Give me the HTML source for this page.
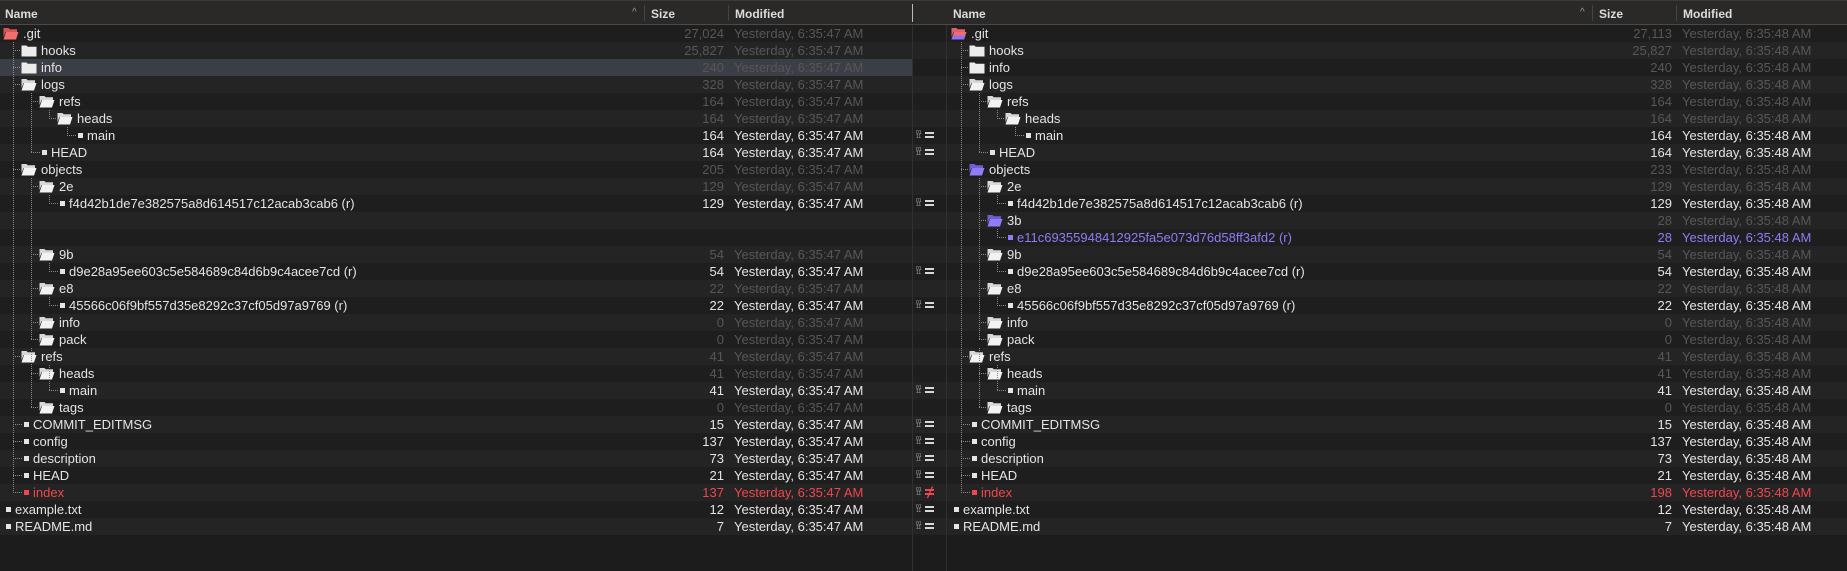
<!DOCTYPE html>
<html><head><meta charset="utf-8">
<style>
*{margin:0;padding:0;box-sizing:border-box}
body{width:1847px;height:546px;background:#1c1c1c;overflow:hidden;font-family:"Liberation Sans",Arial,sans-serif;font-size:13px;color:#e4e4e4;position:relative}
.hdr{position:absolute;left:0;top:0;width:1847px;height:25px;background:#2a2928;border-top:1px solid #3a3a3a;border-bottom:1px solid #4a4a4a}
.hdr .p{height:24px}
.hdr b{position:absolute;top:5px;font-size:12px;color:#dcdcdc}
.hdr .sep{position:absolute;top:4px;width:1px;height:16px;background:#444}
.hdr .car{position:absolute;top:3px;font-size:10px;color:#999}
.rows{position:absolute;left:0;top:25px;width:1847px}
.r{height:17px;position:relative;background:#1e1e1e}
.r:nth-child(even){background:#242424}
.p{position:absolute;top:0;height:17px;overflow:hidden}
.L{left:0;width:912px}
.R{left:948px;width:899px}
.p>*{position:absolute;top:0;line-height:17px;white-space:nowrap}
.s{left:624px;width:100px;text-align:right}
.m{left:734px}
.d{color:#575757}
.w{color:#e4e4e4}
.red{color:#f0474f}
.pur{color:#8f7cf7}
.sel{background:#3b3e45}
.sq{width:5px;height:5px;top:6px;background:#e4e4e4}
.sq.red{background:#f0474f}
.sq.pur{background:#8f7cf7}
svg.f{width:16px;height:13px;top:2px}
.g{position:absolute;left:916px;top:4px;width:20px;height:10px}
.g i{position:absolute;font-style:normal;font-size:5px;line-height:4px;color:#aaa;left:0;top:0;letter-spacing:0}
.g u{position:absolute;left:9px;width:9px;height:2px;background:#d8d8d8;text-decoration:none}
.vl{position:absolute;top:0;width:1px;height:546px;background:#303030}
.tree{position:absolute;top:0;pointer-events:none}
</style></head><body>
<svg width="0" height="0" style="position:absolute">
<defs>
<symbol id="fc" viewBox="0 0 16 13"><path d="M0.5 1.5h5l1.2 1.3h8.8v9.7h-15z" fill="#ececec"/></symbol>
<symbol id="fo" viewBox="0 0 16 13"><path d="M0.5 1h5l1.2 1.3h7.3v2.7h-11.5l-2 5z" fill="#d8d8d8"/><path d="M3 5h12.5l-2.5 7.5h-12.5z" fill="#f2f2f2"/></symbol>
<symbol id="fr" viewBox="0 0 16 13"><path d="M0.5 1h5l1.2 1.3h7.3v2.7h-11.5l-2 5z" fill="#d9534f"/><path d="M3 5h12.5l-2.5 7.5h-12.5z" fill="#f26d6d"/></symbol>
<symbol id="frp" viewBox="0 0 16 13"><path d="M0.5 1h5l1.2 1.3h7.3v2.7h-11.5l-2 5z" fill="#e0606a"/><path d="M3 5h12.5l-2.5 7.5h-12.5z" fill="#f06a75"/><path d="M1.7 8.5h12.8l-1.5 4h-12.5z" fill="#8a72f0"/></symbol>
<symbol id="fp" viewBox="0 0 16 13"><path d="M0.5 1h5l1.2 1.3h7.3v2.7h-11.5l-2 5z" fill="#6f5fd6"/><path d="M3 5h12.5l-2.5 7.5h-12.5z" fill="#8f7cf7"/></symbol>
</defs></svg>

<div class="hdr">
 <div class="p L"><b style="left:5px">Name</b><span class="car" style="left:632px">^</span><span class="sep" style="left:644px"></span><b style="left:651px">Size</b><span class="sep" style="left:728px"></span><b style="left:735px">Modified</b></div>
 <div class="sep" style="left:912px;background:#bbb;height:18px;top:3px"></div>
 <div class="p R"><b style="left:5px">Name</b><span class="car" style="left:632px">^</span><span class="sep" style="left:644px"></span><b style="left:651px">Size</b><span class="sep" style="left:728px"></span><b style="left:735px">Modified</b></div>
</div>

<div class="rows">
<!-- 0 -->
<div class="r"><div class="p L"><svg class="f" style="left:3px"><use href="#fr"/></svg><span style="left:23px">.git</span><span class="s d">27,024</span><span class="m d">Yesterday, 6:35:47 AM</span></div>
<div class="p R"><svg class="f" style="left:3px"><use href="#frp"/></svg><span style="left:23px">.git</span><span class="s d">27,113</span><span class="m d">Yesterday, 6:35:48 AM</span></div></div>
<!-- 1 -->
<div class="r"><div class="p L"><svg class="f" style="left:21px"><use href="#fc"/></svg><span style="left:41px">hooks</span><span class="s d">25,827</span><span class="m d">Yesterday, 6:35:47 AM</span></div>
<div class="p R"><svg class="f" style="left:21px"><use href="#fc"/></svg><span style="left:41px">hooks</span><span class="s d">25,827</span><span class="m d">Yesterday, 6:35:48 AM</span></div></div>
<!-- 2 -->
<div class="r"><div class="p L sel"><svg class="f" style="left:21px"><use href="#fc"/></svg><span style="left:41px">info</span><span class="s d">240</span><span class="m d">Yesterday, 6:35:47 AM</span></div>
<div class="p R"><svg class="f" style="left:21px"><use href="#fc"/></svg><span style="left:41px">info</span><span class="s d">240</span><span class="m d">Yesterday, 6:35:48 AM</span></div></div>
<!-- 3 -->
<div class="r"><div class="p L"><svg class="f" style="left:21px"><use href="#fo"/></svg><span style="left:41px">logs</span><span class="s d">328</span><span class="m d">Yesterday, 6:35:47 AM</span></div>
<div class="p R"><svg class="f" style="left:21px"><use href="#fo"/></svg><span style="left:41px">logs</span><span class="s d">328</span><span class="m d">Yesterday, 6:35:48 AM</span></div></div>
<!-- 4 -->
<div class="r"><div class="p L"><svg class="f" style="left:39px"><use href="#fo"/></svg><span style="left:59px">refs</span><span class="s d">164</span><span class="m d">Yesterday, 6:35:47 AM</span></div>
<div class="p R"><svg class="f" style="left:39px"><use href="#fo"/></svg><span style="left:59px">refs</span><span class="s d">164</span><span class="m d">Yesterday, 6:35:48 AM</span></div></div>
<!-- 5 -->
<div class="r"><div class="p L"><svg class="f" style="left:57px"><use href="#fo"/></svg><span style="left:77px">heads</span><span class="s d">164</span><span class="m d">Yesterday, 6:35:47 AM</span></div>
<div class="p R"><svg class="f" style="left:57px"><use href="#fo"/></svg><span style="left:77px">heads</span><span class="s d">164</span><span class="m d">Yesterday, 6:35:48 AM</span></div></div>
<!-- 6 -->
<div class="r"><div class="p L"><i class="sq" style="left:78px"></i><span style="left:87px">main</span><span class="s w">164</span><span class="m w">Yesterday, 6:35:47 AM</span></div>
<div class="g"><i>01<br>11</i><u style="top:1px"></u><u style="top:5px"></u></div>
<div class="p R"><i class="sq" style="left:78px"></i><span style="left:87px">main</span><span class="s w">164</span><span class="m w">Yesterday, 6:35:48 AM</span></div></div>
<!-- 7 -->
<div class="r"><div class="p L"><i class="sq" style="left:42px"></i><span style="left:51px">HEAD</span><span class="s w">164</span><span class="m w">Yesterday, 6:35:47 AM</span></div>
<div class="g"><i>01<br>11</i><u style="top:1px"></u><u style="top:5px"></u></div>
<div class="p R"><i class="sq" style="left:42px"></i><span style="left:51px">HEAD</span><span class="s w">164</span><span class="m w">Yesterday, 6:35:48 AM</span></div></div>
<!-- 8 -->
<div class="r"><div class="p L"><svg class="f" style="left:21px"><use href="#fo"/></svg><span style="left:41px">objects</span><span class="s d">205</span><span class="m d">Yesterday, 6:35:47 AM</span></div>
<div class="p R"><svg class="f" style="left:21px"><use href="#fp"/></svg><span style="left:41px">objects</span><span class="s d">233</span><span class="m d">Yesterday, 6:35:48 AM</span></div></div>
<!-- 9 -->
<div class="r"><div class="p L"><svg class="f" style="left:39px"><use href="#fo"/></svg><span style="left:59px">2e</span><span class="s d">129</span><span class="m d">Yesterday, 6:35:47 AM</span></div>
<div class="p R"><svg class="f" style="left:39px"><use href="#fo"/></svg><span style="left:59px">2e</span><span class="s d">129</span><span class="m d">Yesterday, 6:35:48 AM</span></div></div>
<!-- 10 -->
<div class="r"><div class="p L"><i class="sq" style="left:60px"></i><span style="left:69px">f4d42b1de7e382575a8d614517c12acab3cab6 (r)</span><span class="s w">129</span><span class="m w">Yesterday, 6:35:47 AM</span></div>
<div class="g"><i>01<br>11</i><u style="top:1px"></u><u style="top:5px"></u></div>
<div class="p R"><i class="sq" style="left:60px"></i><span style="left:69px">f4d42b1de7e382575a8d614517c12acab3cab6 (r)</span><span class="s w">129</span><span class="m w">Yesterday, 6:35:48 AM</span></div></div>
<!-- 11 -->
<div class="r"><div class="p L"></div>
<div class="p R"><svg class="f" style="left:39px"><use href="#fp"/></svg><span style="left:59px">3b</span><span class="s d">28</span><span class="m d">Yesterday, 6:35:48 AM</span></div></div>
<!-- 12 -->
<div class="r"><div class="p L"></div>
<div class="p R"><i class="sq pur" style="left:60px"></i><span class="pur" style="left:69px">e11c69355948412925fa5e073d76d58ff3afd2 (r)</span><span class="s pur">28</span><span class="m pur">Yesterday, 6:35:48 AM</span></div></div>
<!-- 13 -->
<div class="r"><div class="p L"><svg class="f" style="left:39px"><use href="#fo"/></svg><span style="left:59px">9b</span><span class="s d">54</span><span class="m d">Yesterday, 6:35:47 AM</span></div>
<div class="p R"><svg class="f" style="left:39px"><use href="#fo"/></svg><span style="left:59px">9b</span><span class="s d">54</span><span class="m d">Yesterday, 6:35:48 AM</span></div></div>
<!-- 14 -->
<div class="r"><div class="p L"><i class="sq" style="left:60px"></i><span style="left:69px">d9e28a95ee603c5e584689c84d6b9c4acee7cd (r)</span><span class="s w">54</span><span class="m w">Yesterday, 6:35:47 AM</span></div>
<div class="g"><i>01<br>11</i><u style="top:1px"></u><u style="top:5px"></u></div>
<div class="p R"><i class="sq" style="left:60px"></i><span style="left:69px">d9e28a95ee603c5e584689c84d6b9c4acee7cd (r)</span><span class="s w">54</span><span class="m w">Yesterday, 6:35:48 AM</span></div></div>
<!-- 15 -->
<div class="r"><div class="p L"><svg class="f" style="left:39px"><use href="#fo"/></svg><span style="left:59px">e8</span><span class="s d">22</span><span class="m d">Yesterday, 6:35:47 AM</span></div>
<div class="p R"><svg class="f" style="left:39px"><use href="#fo"/></svg><span style="left:59px">e8</span><span class="s d">22</span><span class="m d">Yesterday, 6:35:48 AM</span></div></div>
<!-- 16 -->
<div class="r"><div class="p L"><i class="sq" style="left:60px"></i><span style="left:69px">45566c06f9bf557d35e8292c37cf05d97a9769 (r)</span><span class="s w">22</span><span class="m w">Yesterday, 6:35:47 AM</span></div>
<div class="g"><i>01<br>11</i><u style="top:1px"></u><u style="top:5px"></u></div>
<div class="p R"><i class="sq" style="left:60px"></i><span style="left:69px">45566c06f9bf557d35e8292c37cf05d97a9769 (r)</span><span class="s w">22</span><span class="m w">Yesterday, 6:35:48 AM</span></div></div>
<!-- 17 -->
<div class="r"><div class="p L"><svg class="f" style="left:39px"><use href="#fo"/></svg><span style="left:59px">info</span><span class="s d">0</span><span class="m d">Yesterday, 6:35:47 AM</span></div>
<div class="p R"><svg class="f" style="left:39px"><use href="#fo"/></svg><span style="left:59px">info</span><span class="s d">0</span><span class="m d">Yesterday, 6:35:48 AM</span></div></div>
<!-- 18 -->
<div class="r"><div class="p L"><svg class="f" style="left:39px"><use href="#fo"/></svg><span style="left:59px">pack</span><span class="s d">0</span><span class="m d">Yesterday, 6:35:47 AM</span></div>
<div class="p R"><svg class="f" style="left:39px"><use href="#fo"/></svg><span style="left:59px">pack</span><span class="s d">0</span><span class="m d">Yesterday, 6:35:48 AM</span></div></div>
<!-- 19 -->
<div class="r"><div class="p L"><svg class="f" style="left:21px"><use href="#fo"/></svg><span style="left:41px">refs</span><span class="s d">41</span><span class="m d">Yesterday, 6:35:47 AM</span></div>
<div class="p R"><svg class="f" style="left:21px"><use href="#fo"/></svg><span style="left:41px">refs</span><span class="s d">41</span><span class="m d">Yesterday, 6:35:48 AM</span></div></div>
<!-- 20 -->
<div class="r"><div class="p L"><svg class="f" style="left:39px"><use href="#fo"/></svg><span style="left:59px">heads</span><span class="s d">41</span><span class="m d">Yesterday, 6:35:47 AM</span></div>
<div class="p R"><svg class="f" style="left:39px"><use href="#fo"/></svg><span style="left:59px">heads</span><span class="s d">41</span><span class="m d">Yesterday, 6:35:48 AM</span></div></div>
<!-- 21 -->
<div class="r"><div class="p L"><i class="sq" style="left:60px"></i><span style="left:69px">main</span><span class="s w">41</span><span class="m w">Yesterday, 6:35:47 AM</span></div>
<div class="g"><i>01<br>11</i><u style="top:1px"></u><u style="top:5px"></u></div>
<div class="p R"><i class="sq" style="left:60px"></i><span style="left:69px">main</span><span class="s w">41</span><span class="m w">Yesterday, 6:35:48 AM</span></div></div>
<!-- 22 -->
<div class="r"><div class="p L"><svg class="f" style="left:39px"><use href="#fo"/></svg><span style="left:59px">tags</span><span class="s d">0</span><span class="m d">Yesterday, 6:35:47 AM</span></div>
<div class="p R"><svg class="f" style="left:39px"><use href="#fo"/></svg><span style="left:59px">tags</span><span class="s d">0</span><span class="m d">Yesterday, 6:35:48 AM</span></div></div>
<!-- 23 -->
<div class="r"><div class="p L"><i class="sq" style="left:24px"></i><span style="left:33px">COMMIT_EDITMSG</span><span class="s w">15</span><span class="m w">Yesterday, 6:35:47 AM</span></div>
<div class="g"><i>01<br>11</i><u style="top:1px"></u><u style="top:5px"></u></div>
<div class="p R"><i class="sq" style="left:24px"></i><span style="left:33px">COMMIT_EDITMSG</span><span class="s w">15</span><span class="m w">Yesterday, 6:35:48 AM</span></div></div>
<!-- 24 -->
<div class="r"><div class="p L"><i class="sq" style="left:24px"></i><span style="left:33px">config</span><span class="s w">137</span><span class="m w">Yesterday, 6:35:47 AM</span></div>
<div class="g"><i>01<br>11</i><u style="top:1px"></u><u style="top:5px"></u></div>
<div class="p R"><i class="sq" style="left:24px"></i><span style="left:33px">config</span><span class="s w">137</span><span class="m w">Yesterday, 6:35:48 AM</span></div></div>
<!-- 25 -->
<div class="r"><div class="p L"><i class="sq" style="left:24px"></i><span style="left:33px">description</span><span class="s w">73</span><span class="m w">Yesterday, 6:35:47 AM</span></div>
<div class="g"><i>01<br>11</i><u style="top:1px"></u><u style="top:5px"></u></div>
<div class="p R"><i class="sq" style="left:24px"></i><span style="left:33px">description</span><span class="s w">73</span><span class="m w">Yesterday, 6:35:48 AM</span></div></div>
<!-- 26 -->
<div class="r"><div class="p L"><i class="sq" style="left:24px"></i><span style="left:33px">HEAD</span><span class="s w">21</span><span class="m w">Yesterday, 6:35:47 AM</span></div>
<div class="g"><i>01<br>11</i><u style="top:1px"></u><u style="top:5px"></u></div>
<div class="p R"><i class="sq" style="left:24px"></i><span style="left:33px">HEAD</span><span class="s w">21</span><span class="m w">Yesterday, 6:35:48 AM</span></div></div>
<!-- 27 -->
<div class="r"><div class="p L"><i class="sq red" style="left:24px"></i><span class="red" style="left:33px">index</span><span class="s red">137</span><span class="m red">Yesterday, 6:35:47 AM</span></div>
<div class="g"><i>01<br>11</i><u style="top:1px;background:#f0474f"></u><u style="top:5px;background:#f0474f"></u><svg style="position:absolute;left:10px;top:-2px" width="8" height="13"><path d="M6.5 0.5L1.5 12" stroke="#f0474f" stroke-width="1.3"/></svg></div>
<div class="p R"><i class="sq red" style="left:24px"></i><span class="red" style="left:33px">index</span><span class="s red">198</span><span class="m red">Yesterday, 6:35:48 AM</span></div></div>
<!-- 28 -->
<div class="r"><div class="p L"><i class="sq" style="left:6px"></i><span style="left:15px">example.txt</span><span class="s w">12</span><span class="m w">Yesterday, 6:35:47 AM</span></div>
<div class="g"><i>01<br>11</i><u style="top:1px"></u><u style="top:5px"></u></div>
<div class="p R"><i class="sq" style="left:6px"></i><span style="left:15px">example.txt</span><span class="s w">12</span><span class="m w">Yesterday, 6:35:48 AM</span></div></div>
<!-- 29 -->
<div class="r"><div class="p L"><i class="sq" style="left:6px"></i><span style="left:15px">README.md</span><span class="s w">7</span><span class="m w">Yesterday, 6:35:47 AM</span></div>
<div class="g"><i>01<br>11</i><u style="top:1px"></u><u style="top:5px"></u></div>
<div class="p R"><i class="sq" style="left:6px"></i><span style="left:15px">README.md</span><span class="s w">7</span><span class="m w">Yesterday, 6:35:48 AM</span></div></div>
</div>

<div class="vl" style="left:912px;top:25px"></div>
<div class="vl" style="left:946px;top:25px"></div>

<svg class="tree" style="left:0" width="120" height="546"><path fill="none" stroke="#8a8a8a" stroke-width="1" stroke-dasharray="1 1" d="M13.5 42V492 M31.5 93V152 M49.5 110V118 M67.5 127V135 M31.5 178V339 M49.5 195V203 M49.5 263V271 M49.5 297V305 M31.5 348V407 M49.5 365V390 M13 50.5H20 M13 67.5H20 M13 84.5H20 M31 101.5H38 M49 118.5H56 M67 135.5H77 M31 152.5H41 M13 169.5H20 M31 186.5H38 M49 203.5H59 M31 254.5H38 M49 271.5H59 M31 288.5H38 M49 305.5H59 M31 322.5H38 M31 339.5H38 M13 356.5H20 M31 373.5H38 M49 390.5H59 M31 407.5H38 M13 424.5H23 M13 441.5H23 M13 458.5H23 M13 475.5H23 M13 492.5H23"/></svg>
<svg class="tree" style="left:948px" width="120" height="546"><path fill="none" stroke="#8a8a8a" stroke-width="1" stroke-dasharray="1 1" d="M13.5 42V492 M31.5 93V152 M49.5 110V118 M67.5 127V135 M31.5 178V339 M49.5 195V203 M49.5 229V237 M49.5 263V271 M49.5 297V305 M31.5 348V407 M49.5 365V390 M13 50.5H20 M13 67.5H20 M13 84.5H20 M31 101.5H38 M49 118.5H56 M67 135.5H77 M31 152.5H41 M13 169.5H20 M31 186.5H38 M49 203.5H59 M31 220.5H38 M49 237.5H59 M31 254.5H38 M49 271.5H59 M31 288.5H38 M49 305.5H59 M31 322.5H38 M31 339.5H38 M13 356.5H20 M31 373.5H38 M49 390.5H59 M31 407.5H38 M13 424.5H23 M13 441.5H23 M13 458.5H23 M13 475.5H23 M13 492.5H23"/></svg>
</body></html>
